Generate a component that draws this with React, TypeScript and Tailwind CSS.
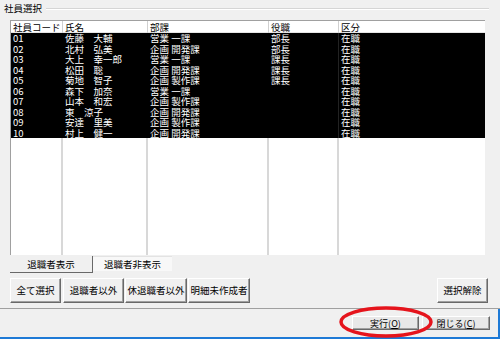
const font = { fontFamily: '"Noto Sans CJK JP", "Noto Sans", sans-serif' };

type Row = { code: string; name: string; dept: string; role: string; status: string };

const rows: Row[] = [
  { code: "01", name: "佐藤　大輔", dept: "営業 一課", role: "部長", status: "在職" },
  { code: "02", name: "北村　弘美", dept: "企画 開発課", role: "部長", status: "在職" },
  { code: "03", name: "大上　幸一郎", dept: "営業 一課", role: "課長", status: "在職" },
  { code: "04", name: "松田　聡", dept: "企画 開発課", role: "課長", status: "在職" },
  { code: "05", name: "菊地　智子", dept: "企画 製作課", role: "課長", status: "在職" },
  { code: "06", name: "森下　加奈", dept: "営業 一課", role: "", status: "在職" },
  { code: "07", name: "山本　和宏", dept: "企画 製作課", role: "", status: "在職" },
  { code: "08", name: "東　涼子", dept: "企画 開発課", role: "", status: "在職" },
  { code: "09", name: "安達　里美", dept: "企画 製作課", role: "", status: "在職" },
  { code: "10", name: "村上　健一", dept: "企画 開発課", role: "", status: "在職" },
];

const cols = "grid grid-cols-[52px_85px_121px_70px_1fr]";

function ClassicButton({ label, w }: { label: string; w: string }) {
  return (
    <button
      className={`${w} h-[25px] bg-[#f0f0f0] border-t border-l border-white border-r border-b border-r-[#696969] border-b-[#696969] shadow-[inset_-1px_-1px_0_#a0a0a0] text-[9.5px] text-black flex items-center justify-center`}
    >
      {label}
    </button>
  );
}

function SmallButton({ label, hot, w }: { label: string; hot: string; w: string }) {
  return (
    <button
      className={`${w} h-[14px] bg-[#e8e8e8] border-t border-l border-white border-r border-b border-r-[#696969] border-b-[#696969] shadow-[inset_-1px_-1px_0_#a0a0a0] text-[9px] leading-none text-black flex items-center justify-center`}
    >
      {label}(<span className="underline">{hot}</span>)
    </button>
  );
}

export default function App() {
  return (
    <div className="relative w-[500px] h-[345px] bg-white overflow-hidden text-black" style={font}>
      <div className="h-[308px] bg-[#f0f0f0] flex flex-col">
        {/* group title */}
        <div className="flex items-center h-[14px] mt-[2px] pl-[4px] pr-[11px] gap-[4px]">
          <span className="text-[9.5px] leading-none">社員選択</span>
          <div className="flex-1 h-[2px] border-t border-[#d5d5d5] border-b border-b-white" />
        </div>

        {/* list */}
        <div className="ml-[10px] mt-[4px] w-[475px] h-[235px] bg-white border-t border-l border-[#a0a0a0] flex flex-col text-[9.5px]">
          <div className={`${cols} h-[12px] leading-[12px] border-b border-[#e5e5e5]`}>
            {["社員コード", "氏名", "部課", "役職", "区分"].map((h, i) => (
              <div key={h} className={`pl-[2px] ${i < 4 ? "border-r border-[#d0d0d0]" : ""}`}>
                {h}
              </div>
            ))}
          </div>
          <div className="bg-black text-white">
            {rows.map((r) => (
              <div key={r.code} className={`${cols} h-[10.5px] leading-[10.5px]`}>
                <div className="pl-[2px] border-r border-black">{r.code}</div>
                <div className="pl-[2px] border-r border-black whitespace-nowrap">{r.name}</div>
                <div className="pl-[2px] border-r border-black">{r.dept}</div>
                <div className="pl-[2px] border-r border-[#222]">{r.role}</div>
                <div className="pl-[2px]">{r.status}</div>
              </div>
            ))}
          </div>
          <div className={`${cols} flex-1`}>
            <div className="border-r-2 border-[#d8d8d8]" />
            <div className="border-r-2 border-[#d8d8d8]" />
            <div className="border-r-2 border-[#d8d8d8]" />
            <div className="border-r-2 border-[#d8d8d8]" />
            <div />
          </div>
        </div>

        {/* tabs */}
        <div className="flex ml-[10px] mt-[1px] h-[17px] text-[9.5px]">
          <div className="w-[83px] h-[17px] bg-[#f0f0f0] border-r border-b border-[#696969] flex items-center justify-center">
            退職者表示
          </div>
          <div className="w-[79px] h-[15px] bg-[#f8f8f8] border-t border-[#e3e3e3] flex items-center justify-center">
            退職者非表示
          </div>
        </div>

        {/* buttons */}
        <div className="flex mt-[5px] ml-[10px] pr-[12px]">
          <ClassicButton label="全て選択" w="w-[51px]" />
          <div className="w-[2px]" />
          <ClassicButton label="退職者以外" w="w-[61px]" />
          <div className="w-[1px]" />
          <ClassicButton label="休退職者以外" w="w-[62px]" />
          <div className="w-[1px]" />
          <ClassicButton label="明細未作成者" w="w-[62px]" />
          <div className="flex-1" />
          <ClassicButton label="選択解除" w="w-[51px]" />
        </div>
      </div>

      {/* separator */}
      <div className="h-[1px] bg-[#a0a0a0]" />
      <div className="h-[30px] bg-[#f0f0f0] border-b-2 border-r-2 border-[#1e7ad6] flex items-start justify-end pt-[7px] pr-[8px] gap-[3px]">
        <SmallButton label="実行" hot="O" w="w-[67px]" />
        <SmallButton label="閉じる" hot="C" w="w-[68px]" />
      </div>

      {/* red annotation ring */}
      <svg className="absolute left-[338px] top-[305px]" width="96" height="34" viewBox="0 0 96 34">
        <ellipse cx="48" cy="17" rx="45" ry="14" fill="none" stroke="#e5141c" strokeWidth="3.5" />
      </svg>
    </div>
  );
}
